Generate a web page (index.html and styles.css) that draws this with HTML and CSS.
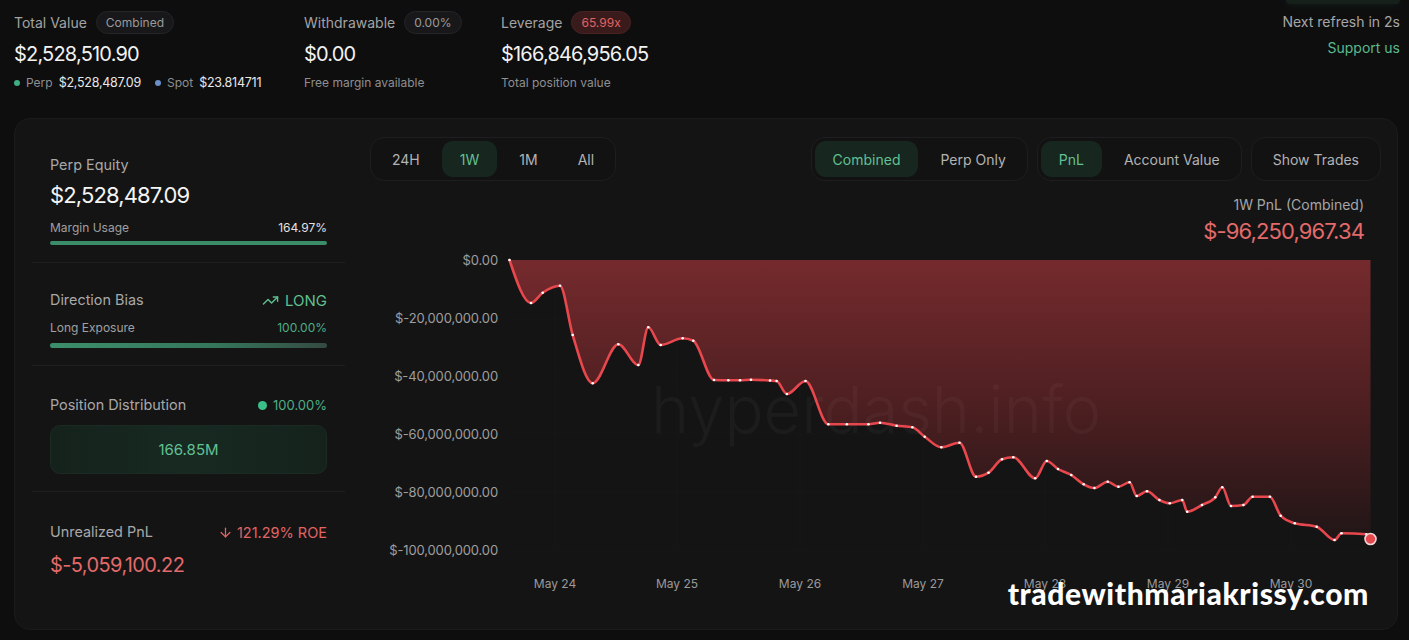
FILE: index.html
```html
<!DOCTYPE html>
<html>
<head>
<meta charset="utf-8">
<title>Hyperdash</title>
<link rel="stylesheet" href="styles.css">
</head>
<body>
<header class="top">
  <div class="stats">
    <div class="stat">
      <div class="stat-head"><span class="stat-label">Total Value</span><span class="badge">Combined</span></div>
      <div class="stat-value">$2,528,510.90</div>
      <div class="stat-sub">
        <span class="dot dot-green"></span><span>Perp</span><span class="sub-val">$2,528,487.09</span>
        <span class="dot dot-blue"></span><span>Spot</span><span class="sub-val">$23.814711</span>
      </div>
    </div>
    <div class="stat">
      <div class="stat-head"><span class="stat-label">Withdrawable</span><span class="badge">0.00%</span></div>
      <div class="stat-value">$0.00</div>
      <div class="stat-sub"><span>Free margin available</span></div>
    </div>
    <div class="stat">
      <div class="stat-head"><span class="stat-label">Leverage</span><span class="badge badge-red">65.99x</span></div>
      <div class="stat-value">$166,846,956.05</div>
      <div class="stat-sub"><span>Total position value</span></div>
    </div>
  </div>
  <div class="top-right">
    <div class="glow"></div>
    <div class="refresh">Next refresh in 2s</div>
    <a class="support">Support us</a>
  </div>
</header>

<main class="card">
  <aside class="side">
    <section class="sec sec-1">
      <div class="sec-label">Perp Equity</div>
      <div class="sec-value">$2,528,487.09</div>
      <div class="row small"><span>Margin Usage</span><span class="light">164.97%</span></div>
      <div class="bar bar-full"></div>
    </section>
    <section class="sec sec-2">
      <div class="row"><span class="sec-label">Direction Bias</span>
        <span class="long"><svg class="ico" viewBox="0 0 24 24" fill="none" stroke="currentColor" stroke-width="2" stroke-linecap="round" stroke-linejoin="round"><polyline points="22 7 13.5 15.5 8.5 10.5 2 17"/><polyline points="16 7 22 7 22 13"/></svg>LONG</span></div>
      <div class="row small"><span>Long Exposure</span><span class="green">100.00%</span></div>
      <div class="bar bar-grad"></div>
    </section>
    <section class="sec sec-3">
      <div class="row"><span class="sec-label">Position Distribution</span><span class="pct"><span class="gdot"></span>100.00%</span></div>
      <div class="dist">166.85M</div>
    </section>
    <section class="sec sec-4">
      <div class="row"><span class="sec-label">Unrealized PnL</span>
        <span class="roe"><svg class="ico ico-s" viewBox="0 0 24 24" fill="none" stroke="currentColor" stroke-width="2" stroke-linecap="round" stroke-linejoin="round"><path d="M12 5v14"/><path d="m19 12-7 7-7-7"/></svg>121.29% ROE</span></div>
      <div class="sec-value pnl-value">$-5,059,100.22</div>
    </section>
  </aside>

  <div class="chart-col">
    <div class="toolbar">
      <div class="seg seg-time">
        <button class="btn">24H</button>
        <button class="btn on">1W</button>
        <button class="btn">1M</button>
        <button class="btn">All</button>
      </div>
      <div class="seg-wrap">
        <div class="seg"><button class="btn on">Combined</button><button class="btn">Perp Only</button></div>
        <div class="seg"><button class="btn on">PnL</button><button class="btn">Account Value</button></div>
        <div class="seg"><button class="btn">Show Trades</button></div>
      </div>
    </div>
    <div class="summary">
      <div class="sum-label">1W PnL (Combined)</div>
      <div class="sum-value">$-96,250,967.34</div>
    </div>
    <svg class="chart" viewBox="370 250 1012 362" width="1012" height="362">
      <defs>
        <linearGradient id="areaGrad" gradientUnits="userSpaceOnUse" x1="0" y1="260" x2="0" y2="545">
          <stop offset="0" stop-color="#752a2d"/>
          <stop offset="0.55" stop-color="#4a1e20"/>
          <stop offset="1" stop-color="#1f1516"/>
        </linearGradient>
      </defs>
      <g class="grid">
        <line x1="555" y1="260" x2="555" y2="550"/>
        <line x1="677" y1="260" x2="677" y2="550"/>
        <line x1="800" y1="260" x2="800" y2="550"/>
        <line x1="923" y1="260" x2="923" y2="550"/>
        <line x1="1045" y1="260" x2="1045" y2="550"/>
        <line x1="1168" y1="260" x2="1168" y2="550"/>
        <line x1="1291" y1="260" x2="1291" y2="550"/>
        <line x1="510" y1="318" x2="1371" y2="318"/>
        <line x1="510" y1="376" x2="1371" y2="376"/>
        <line x1="510" y1="434" x2="1371" y2="434"/>
        <line x1="510" y1="492" x2="1371" y2="492"/>
        <line x1="510" y1="550" x2="1371" y2="550"/>
      </g>
      <path id="pnl-area" fill="url(#areaGrad)" d=""/>
      <text class="wm" x="651" y="433">hyperdash.info</text>
      <g class="ylab">
        <text x="498" y="260">$0.00</text>
        <text x="498" y="318">$-20,000,000.00</text>
        <text x="498" y="376">$-40,000,000.00</text>
        <text x="498" y="434">$-60,000,000.00</text>
        <text x="498" y="492">$-80,000,000.00</text>
        <text x="498" y="550">$-100,000,000.00</text>
      </g>
      <g class="xlab">
        <text x="555" y="583">May 24</text>
        <text x="677" y="583">May 25</text>
        <text x="800" y="583">May 26</text>
        <text x="923" y="583">May 27</text>
        <text x="1045" y="583">May 28</text>
        <text x="1168" y="583">May 29</text>
        <text x="1291" y="583">May 30</text>
      </g>
      <path id="pnl-line" class="line" d=""/>
      <g id="pnl-dots" class="pdots"></g>
      <circle class="last" cx="1370.5" cy="539" r="5.5"/>
    </svg>
  </div>
  <div class="brand">tradewithmariakrissy.com</div>
</main>
<script src="script.js"></script>
</body>
</html>
```

FILE: styles.css
```css
* { box-sizing: border-box; margin: 0; padding: 0; }
html, body { background: #0e0e0f; }
body {
  font-family: Inter, "Liberation Sans", sans-serif;
  color: #e6e6e6;
  width: 1409px;
  height: 640px;
  overflow: hidden;
}

/* header */
.top {
  height: 118px;
  display: flex;
  justify-content: space-between;
  padding: 11px 9px 0 14px;
}
.stats { display: grid; grid-template-columns: 290px 197px auto; }
.stat-head { display: flex; align-items: center; gap: 9px; height: 23px; }
.stat-label { font-size: 14px; color: #a3a3a3; }
.badge {
  font-size: 12px; color: #9a9a9a; height: 23px; line-height: 21px;
  padding: 0 9px; border-radius: 12px; border: 1px solid #252527; background: #18181a;
}
.badge-red { color: #e06464; background: #3a1b1c; border-color: #4a2223; }
.stat-value { font-size: 20px; line-height: 26px; margin-top: 7px; color: #f2f2f2; letter-spacing: -0.04em; }
.stat-sub { display: flex; align-items: center; gap: 6px; margin-top: 8px; font-size: 12px; line-height: 16px; color: #8f8f8f; }
.sub-val { color: #e8e8e8; font-size: 12.5px; letter-spacing: -0.02em; }
.sub-val + .dot { margin-left: 8px; }
.dot { width: 6px; height: 6px; border-radius: 50%; }
.dot-green { background: #3fae84; }
.dot-blue { background: #6b8fc9; }

.top-right { position: relative; display: flex; flex-direction: column; align-items: flex-end; }
.glow {
  position: absolute; top: -11px; right: 0; width: 114px; height: 4px;
  border-radius: 0 0 10px 10px; background: #15201b;
  box-shadow: 0 0 8px rgba(70, 150, 110, 0.18);
}
.refresh { font-size: 14px; line-height: 20px; margin-top: 1px; color: #a6a6a6; }
.support { font-size: 14px; line-height: 20px; margin-top: 6px; color: #5cb98c; }

/* card */
.card {
  position: relative;
  margin-left: 14px;
  width: 1384px;
  height: 512px;
  background: #141415;
  border: 1px solid #1b1b1d;
  border-radius: 16px;
  padding: 17px 15px 0 17px;
  display: flex;
  gap: 25px;
}
.side { width: 313px; flex: none; }
.sec { padding: 0 18px; border-bottom: 1px solid #1f1f21; }
.sec:last-child { border-bottom: none; }
.sec-1 { padding-top: 19px; padding-bottom: 17px; }
.sec-2 { padding-top: 27px; padding-bottom: 17px; }
.sec-3 { padding-top: 29px; padding-bottom: 17px; }
.sec-4 { padding-top: 30px; }
.sec-label { font-size: 14.4px; line-height: 20px; color: #a8a8a8; }
.sec-value { font-size: 22px; line-height: 28px; margin-top: 6px; color: #f4f4f4; letter-spacing: -0.04em; }
.pnl-value { font-size: 20px; margin-top: 9px; color: #e26a6a; letter-spacing: -0.03em; }
.row { display: flex; justify-content: space-between; align-items: center; }
.row.small { font-size: 12px; line-height: 16px; color: #a0a0a0; margin-top: 11px; }
.sec-2 .row.small { margin-top: 10px; }
.light { color: #e2e2e2; }
.green { color: #4fae85; }
.bar { border-radius: 3px; }
.bar-full { height: 4px; margin-top: 5px; background: #3b8c69; }
.bar-grad { height: 5px; margin-top: 7px; background: linear-gradient(90deg, #3c8f6b, #35765b 60%, #344a41); }
.long { display: flex; align-items: center; gap: 6px; font-size: 15px; color: #5fbf8f; }
.ico { width: 17px; height: 17px; }
.ico-s { width: 15px; height: 15px; }
.pct { display: flex; align-items: center; gap: 6px; font-size: 13px; color: #4fae85; }
.gdot { width: 9px; height: 9px; border-radius: 50%; background: #3cc08a; }
.dist {
  margin-top: 10px; height: 49px; border-radius: 10px;
  background: linear-gradient(90deg, #15221c, #172a22 50%, #15221c);
  border: 1px solid #1b2a23;
  display: flex; align-items: center; justify-content: center;
  font-size: 15px; color: #62c093;
}
.roe { display: flex; align-items: center; gap: 4px; font-size: 14.5px; color: #e06464; }

/* chart column */
.chart-col { width: 1012px; flex: none; margin-top: 1px; }
.toolbar { display: flex; justify-content: space-between; height: 44px; }
.seg-wrap { display: flex; gap: 9px; margin-right: 1px; }
.seg {
  display: flex; gap: 4px; padding: 3px; height: 44px;
  border: 1px solid #1e1e20; border-radius: 14px; background: #121213;
}
.btn {
  font-family: inherit; font-size: 14px; color: #b3b3b3;
  background: transparent; border: none; border-radius: 11px;
  padding: 0 18px; height: 36px;
}
.btn.on { background: #17261f; color: #62c093; }
.summary { margin-top: 14px; padding-right: 18px; text-align: right; }
.sum-label { font-size: 14px; line-height: 20px; color: #a6a6a6; }
.sum-value { font-size: 22px; line-height: 28px; margin-top: 2px; color: #e26a6a; letter-spacing: -0.04em; }
.chart { display: block; margin-top: 5px; overflow: visible; }
.grid line { stroke: rgba(255,255,255,0.02); stroke-width: 1; }
.ylab text { font-family: Inter, "Liberation Sans", sans-serif; font-size: 13px; letter-spacing: -0.01em; fill: #9e9e9e; text-anchor: end; dominant-baseline: central; }
.xlab text { font-family: Inter, "Liberation Sans", sans-serif; font-size: 12px; fill: #9a9a9a; text-anchor: middle; dominant-baseline: central; }
.wm { font-family: Inter, "Liberation Sans", sans-serif; font-size: 65px; font-weight: 300; fill: #ffffff; fill-opacity: 0.035; }
.line { fill: none; stroke: #e8484d; stroke-width: 2.6; stroke-linejoin: round; stroke-linecap: round; }
.pdots circle { fill: #ffffff; }
.last { fill: #e5484d; stroke: #f3d6d6; stroke-width: 1.6; }

.brand {
  position: absolute; right: 28px; top: 459px;
  font-family: Lato, "Open Sans", sans-serif; font-weight: 900;
  font-size: 30px; line-height: 30px; color: #ffffff; letter-spacing: 0.6px;
}
```

FILE: script.js
```js
(function () {
  var pts = [[509.5,260],[531,303],[542.7,292.7],[560,285.7],[572.7,335],[592.7,383.3],[618.3,344.3],[638.3,365],[648.3,327.3],[660.7,345],[682.7,338.3],[693.3,340.7],[714,380],[728.3,380.3],[740,380.3],[751,379.7],[770,380.5],[776.6,381],[786.9,394],[805.5,381],[828.3,424.3],[846.9,424.3],[868.4,424.3],[880,422.7],[896.6,425.7],[912.3,427.3],[924.7,436.7],[941.3,447.3],[959.5,442.7],[976,476.7],[988.5,472.7],[1002,459.3],[1013.3,457.3],[1035.2,478.3],[1046.8,461],[1058,469],[1071.3,475],[1083.7,484.3],[1094.4,488],[1107.7,481.7],[1118.4,486.7],[1129.6,482.3],[1136.7,496],[1147,491.3],[1159.4,500],[1169.8,503.3],[1182.2,500],[1187.2,511.7],[1202,505],[1215.3,497.3],[1222.3,487.3],[1231,506],[1243.4,505],[1252.6,496.7],[1269.9,496.7],[1280.7,515.7],[1294.8,523.3],[1316.7,526.7],[1334.5,540],[1341.5,533.3],[1366.4,534.3],[1370.5,539]];
  function sign(v) { return v < 0 ? -1 : 1; }
  var n = pts.length, t = new Array(n), i;
  for (i = 1; i < n - 1; i++) {
    var h0 = pts[i][0] - pts[i-1][0], h1 = pts[i+1][0] - pts[i][0];
    var s0 = (pts[i][1] - pts[i-1][1]) / h0, s1 = (pts[i+1][1] - pts[i][1]) / h1;
    var p = (s0 * h1 + s1 * h0) / (h0 + h1);
    t[i] = (sign(s0) + sign(s1)) * Math.min(Math.abs(s0), Math.abs(s1), 0.5 * Math.abs(p)) || 0;
  }
  var hA = pts[1][0] - pts[0][0];
  t[0] = (3 * (pts[1][1] - pts[0][1]) / hA - t[1]) / 2;
  var hB = pts[n-1][0] - pts[n-2][0];
  t[n-1] = (3 * (pts[n-1][1] - pts[n-2][1]) / hB - t[n-2]) / 2;
  var d = 'M' + pts[0][0] + ',' + pts[0][1];
  for (i = 0; i < n - 1; i++) {
    var a = pts[i], b = pts[i+1], dx = (b[0] - a[0]) / 3;
    d += 'C' + (a[0] + dx) + ',' + (a[1] + dx * t[i]) + ',' + (b[0] - dx) + ',' + (b[1] - dx * t[i+1]) + ',' + b[0] + ',' + b[1];
  }
  document.getElementById('pnl-line').setAttribute('d', d);
  document.getElementById('pnl-area').setAttribute('d', d + 'L' + pts[n-1][0] + ',260L' + pts[0][0] + ',260Z');
  var g = document.getElementById('pnl-dots'), ns = 'http://www.w3.org/2000/svg';
  for (i = 0; i < n - 1; i++) {
    var c = document.createElementNS(ns, 'circle');
    c.setAttribute('cx', pts[i][0]);
    c.setAttribute('cy', pts[i][1]);
    c.setAttribute('r', '1.3');
    g.appendChild(c);
  }
})();
```
